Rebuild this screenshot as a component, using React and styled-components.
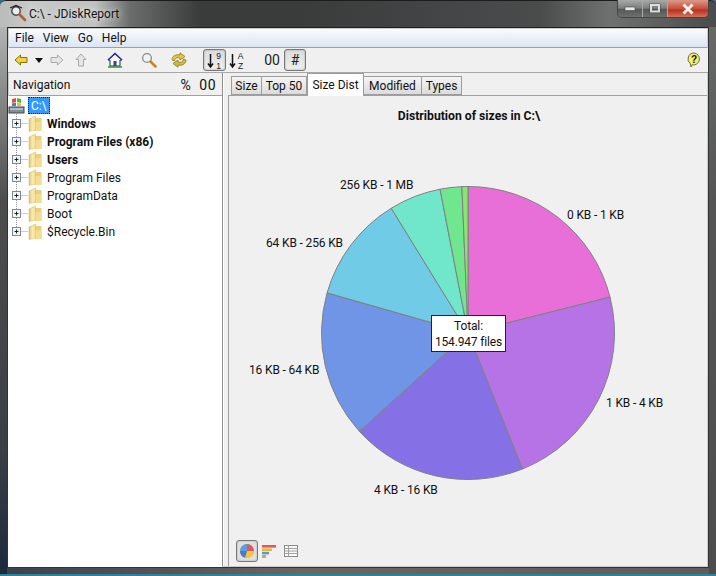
import React from "react";
import styled, { createGlobalStyle } from "styled-components";

const Global = createGlobalStyle`
  html, body { margin: 0; padding: 0; width: 716px; height: 576px; overflow: hidden; background: #2f6f80; }
  * { box-sizing: border-box; }
`;

const Win = styled.div`
  width: 716px; height: 576px; display: flex; flex-direction: column;
  padding: 0 7px 6px 7px; border-radius: 6px 6px 0 0;
  font: 12px Roboto, "Noto Sans", sans-serif; color: #111;
  background:
    linear-gradient(180deg, #c4c6c6 0, #8a8c8c 90px, #4d4d4d 200px, #3a3f48 450px, #1d2a3c 100%) left top / 7px 100% no-repeat,
    linear-gradient(180deg, #6a6c6c 0, #555 200px, #4d4d4d 100%) right top / 7px 100% no-repeat,
    linear-gradient(90deg, #3a4150 0, #6b6560 300px, #5f5c5a 100%);
  border-bottom: 2px solid #2f8296;
`;
const TitleBar = styled.div`
  height: 27px; margin: 0 -7px; padding: 0 7px 0 9px; flex: none; display: flex; align-items: flex-start;
  border-top: 1px solid #1c1c1c; border-radius: 6px 6px 0 0;
  background: linear-gradient(90deg, #b9bbbb 0, #c8caca 30px, #c0c2c2 95px, #6b6d6d 130px, #3a3c3c 200px, #3a3c3c 300px, #454848 470px, #4a4c4c 540px, #6f7171 610px, #4a4c4c 716px);
`;
const AppIcon = styled.svg` width: 18px; height: 18px; margin-top: 3px; flex: none; `;
const TitleText = styled.span`
  margin: 3px 0 0 2px; font-size: 12px; line-height: 20px; color: #111; text-shadow: 0 0 6px #fff;
`;
const Caption = styled.div`
  margin-left: auto; display: flex; height: 18px; width: 92px; margin-top: -1px;
  border: 1px solid #444; border-top: none; border-radius: 0 0 5px 5px; overflow: hidden;
`;
const CapBtn = styled.div`
  flex: ${p => p.$close ? "0 0 41px" : "1"}; display: flex; align-items: center; justify-content: center;
  border-left: ${p => p.$first ? "0" : "1px solid #aaa"};
  background: ${p => p.$close
    ? "linear-gradient(180deg, #dd9a8c 0, #c7503c 50%, #b8321f 60%, #d5705e 100%)"
    : "linear-gradient(180deg, #a8aaaa 0, #7d7f7f 48%, #565858 55%, #6d6f6f 100%)"};
`;
const Client = styled.div`
  flex: 1; min-height: 0; display: flex; flex-direction: column; background: #f0f0f0;
  border: 1px solid #333; border-width: 0 1px 1px 1px; outline: 1px solid #ccc; outline-offset: -2px;
`;
const MenuBar = styled.div`
  height: 21px; flex: none; display: flex; align-items: center; padding: 1px 7px 0; gap: 9px;
  background: linear-gradient(180deg, #fbfcfe 0, #dbe5f3 100%);
  border-top: 1px solid #1e1e1e; border-bottom: 1px solid #a0a0a0; font-size: 12px;
`;
const ToolBar = styled.div`
  height: 25px; flex: none; display: flex; align-items: center; background: #f0f0f0;
  border-bottom: 1px solid #a8a8a8; position: relative; padding-left: 2px;
`;
const Tool = styled.div`
  flex: none; width: ${p => p.$w || 22}px; height: 22px; margin-left: ${p => p.$ml || 0}px;
  display: flex; align-items: center; justify-content: center; border-radius: 3px;
  font-size: 14px; color: #222;
  ${p => p.$on ? "border: 1px solid #777; background: linear-gradient(180deg,#dcdcdc,#eeeeee); box-shadow: inset 0 0 2px #999;" : ""}
`;
const Help = styled.div` margin-left: auto; margin-right: 7px; display: flex; `;
const Main = styled.div` flex: 1; min-height: 0; display: flex; `;
const Left = styled.div`
  width: 215px; flex: none; display: flex; flex-direction: column;
  border-right: 1px solid #8e8e8e;
`;
const NavHead = styled.div`
  height: 23px; flex: none; display: flex; align-items: center; justify-content: space-between;
  padding: 1px 6px 0 5px; font-size: 12px; background: #f0f0f0; border-bottom: 1px solid #a0a0a0;
`;
const NavCols = styled.span` font-size: 14px; letter-spacing: .5px; word-spacing: 4px; `;
const Tree = styled.div` flex: 1; background: #fff; display: flex; flex-direction: column; position: relative; padding-bottom: 1px; `;
const Row = styled.div` height: 18px; display: flex; align-items: center; flex: none; `;
const Expander = styled.svg` width: 20px; height: 18px; flex: none; `;
const RootIcon = styled.svg` width: 17px; height: 17px; margin: 0 3px 0 0; flex: none; `;
const Sel = styled.span`
  background: #3399ff; color: #fff; height: 17px; line-height: 16px; padding: 0 2px; border: 1px dotted #123; font-size: 12px;
`;
const Folder = styled.svg` width: 14px; height: 17px; margin-right: 5px; flex: none; `;
const RowText = styled.span`
  font-weight: ${p => p.$b ? 700 : 400}; font-size: 12px; white-space: nowrap; padding-top: 2px;
`;
const Right = styled.div`
  flex: 1; min-width: 0; display: flex; flex-direction: column; padding: 0 0 0 4px;
  border-left: 1px solid #fff; background: #f0f0f0;
`;
const Tabs = styled.div`
  height: 23px; flex: none; display: flex; align-items: flex-end; padding-left: 3px;
  border-bottom: 1px solid #a0a0a0;
`;
const Tab = styled.div`
  height: ${p => p.$on ? 23 : 19}px; width: ${p => p.$w}px; margin-bottom: ${p => p.$on ? -1 : 0}px;
  display: flex; align-items: center; justify-content: center; font-size: 12px; padding-top: ${p => p.$on ? 0 : 1}px;
  background: ${p => p.$on ? "#fff" : "linear-gradient(180deg, #f4f4f4, #dcdcdc)"};
  border: 1px solid #9c9c9c; border-left-width: ${p => p.$on ? 1 : 0}px; border-bottom: ${p => p.$on ? "0" : "1px solid #9c9c9c"};
  position: relative; z-index: ${p => p.$on ? 1 : 0};
  &:first-child { border-left-width: 1px; }
`;
const Panel = styled.div`
  flex: 1; min-height: 0; display: flex; flex-direction: column; border-left: 1px solid #a0a0a0; background: #f0f0f0;
`;
const ChartTitle = styled.div`
  flex: none; text-align: center; font-weight: 700; font-size: 12.2px; padding-top: 13px; height: 41px; margin-left: -3px; margin-right: -4px;
`;
const Chart = styled.div` position: relative; flex: 1; min-height: 0; `;
const PieSvg = styled.svg` position: absolute; left: 91px; top: 48px; width: 296px; height: 296px; `;
const Label = styled.span`
  position: absolute; left: ${p => p.$x}px; top: ${p => p.$y}px; font-size: 12px; white-space: nowrap; line-height: 16px; letter-spacing: -.15px;
`;
const Tip = styled.div`
  position: absolute; left: 202px; top: 178px; width: 75px; height: 37px; background: #fff;
  border: 1px solid #222; text-align: center; font-size: 12px; line-height: 16px; padding-top: 2px; letter-spacing: -.15px;
`;
const Views = styled.div` flex: none; height: 27px; display: flex; align-items: flex-start; padding-left: 7px; `;
const ViewBtn = styled.div`
  width: 22px; height: 22px; display: flex; align-items: center; justify-content: center; border-radius: 3px;
  ${p => p.$on ? "border: 1px solid #777; background: #e0e0e0; box-shadow: inset 0 0 2px #aaa;" : ""}
`;

const YArrow = ({ flip, fill = "#f3d23c", stroke = "#8a6d10" }) => (
  <svg width="14" height="12" viewBox="0 0 14 12" style={flip ? { transform: "scaleX(-1)" } : undefined}>
    <path d="M1 6 L6.5 1 V3.5 H13 V8.5 H6.5 V11 Z" fill={fill} stroke={stroke} strokeLinejoin="round" />
  </svg>
);
const UpArrow = () => (
  <svg width="12" height="14" viewBox="0 0 12 14"><path d="M6 1 L11 6.5 H8.5 V13 H3.5 V6.5 H1 Z" fill="#e6e6e6" stroke="#a9a9a9" strokeLinejoin="round" /></svg>
);
const Home = () => (
  <svg width="16" height="16" viewBox="0 0 16 16">
    <path d="M1 8 L8 1.5 L15 8 H13 V14 H3 V8 Z" fill="#fdf8e8" stroke="#1c2a80" strokeLinejoin="round" />
    <path d="M1 8 L8 1.5 L15 8" fill="none" stroke="#2030a8" strokeWidth="1.6" />
    <rect x="6.5" y="9" width="3" height="5" fill="#3040b0" />
    <path d="M1 15 H15" stroke="#3f9a3a" strokeWidth="1.6" />
  </svg>
);
const Search = () => (
  <svg width="16" height="16" viewBox="0 0 16 16">
    <circle cx="6" cy="6" r="4.4" fill="#eef4f8" stroke="#8a8a8a" strokeWidth="1.3" />
    <path d="M9.5 9.5 L14.5 14.5" stroke="#c08a20" strokeWidth="2.6" strokeLinecap="round" />
  </svg>
);
const Refresh = () => (
  <svg width="18" height="16" viewBox="0 0 18 16">
    <path d="M2 8 C2 4 6 2 10 3 V0.8 L15 4.5 L10 8 V6 C7 5 5 6 4.5 9 Z" fill="#e6c63c" stroke="#8f7a20" strokeWidth=".8" />
    <path d="M16 8 C16 12 12 14 8 13 V15.2 L3 11.5 L8 8 V10 C11 11 13 10 13.5 7 Z" fill="#d6b838" stroke="#7f7a30" strokeWidth=".8" />
  </svg>
);
const SortIcon = ({ a, b }) => (
  <svg width="18" height="19" viewBox="0 0 18 19">
    <path d="M4.5 3 V15.5 M2 12.5 L4.5 16 L7 12.5" fill="none" stroke="#111" strokeWidth="1.5" />
    <text x="12.5" y="7.8" textAnchor="middle" fontSize="8.5" fontFamily="Liberation Sans" fill="#222">{a}</text>
    <text x="12.5" y="17.6" textAnchor="middle" fontSize="8.5" fontFamily="Liberation Sans" fill="#222">{b}</text>
  </svg>
);
const HelpIcon = () => (
  <svg width="14" height="16" viewBox="0 0 14 16">
    <path d="M7 1 A6 6 0 1 1 5 12.8 L4 15 L3.4 11.8 A6 6 0 0 1 7 1 Z" fill="#f6ee6a" stroke="#6f6f3a" />
    <text x="7" y="11" textAnchor="middle" fontSize="10" fontWeight="700" fontFamily="Liberation Sans" fill="#111">?</text>
  </svg>
);
const FolderIcon = () => (
  <Folder viewBox="0 0 14 17">
    <defs>
      <linearGradient id="fg" x1="0" x2="1" y1="0" y2="0">
        <stop offset="0" stopColor="#d8bf6e" /><stop offset=".5" stopColor="#f9ecb0" /><stop offset="1" stopColor="#f4dd8e" />
      </linearGradient>
    </defs>
    <path d="M6 3 H13.5 V16 H6 Z" fill="#e9cf7e" />
    <path d="M1 4 L7.5 1 V15 L1 16.5 Z" fill="url(#fg)" stroke="#cdb56a" strokeWidth=".5" />
    <path d="M7.5 7 L13.5 7 V16 H3 L7.5 15 Z" fill="#f3dd94" />
  </Folder>
);
const Exp = ({ last }) => (
  <Expander viewBox="0 0 20 18">
    <path d={`M8.5 0 V${last ? 9 : 18} M8.5 9.5 H20`} stroke="#999" strokeDasharray="1 1" fill="none" />
    <rect x="4.5" y="5.5" width="8" height="8" fill="#f4f4f4" stroke="#7b8a9a" />
    <path d="M6.5 9.5 H10.5 M8.5 7.5 V11.5" stroke="#222" />
  </Expander>
);
const polar = (a, r = 146.5) => {
  const t = (a * Math.PI) / 180;
  return [148 + r * Math.sin(t), 148 - r * Math.cos(t)];
};
const slices = [
  [0, 75.8, "#e86fd8"], [75.8, 158.2, "#b673e6"], [158.2, 227.8, "#8670e6"], [227.8, 285.9, "#7094e6"],
  [285.9, 328.4, "#70cbe6"], [328.4, 349, "#70e6cb"], [349, 357.6, "#70e68f"], [357.6, 360, "#86e670"],
];
const labels = [
  ["0 KB - 1 KB", 338, 70], ["1 KB - 4 KB", 377, 258], ["4 KB - 16 KB", 145, 345], ["16 KB - 64 KB", 20, 225],
  ["64 KB - 256 KB", 37, 98], ["256 KB - 1 MB", 111, 40],
];
const folders = [
  ["Windows", 1], ["Program Files (x86)", 1], ["Users", 1], ["Program Files"], ["ProgramData"], ["Boot"], ["$Recycle.Bin"],
];
const tabs = [["Size", 31], ["Top 50", 45], ["Size Dist", 57, 1], ["Modified", 58], ["Types", 40]];

export default function App() {
  return (
    <Win>
      <Global />
      <TitleBar>
        <AppIcon viewBox="0 0 18 18">
          <circle cx="7" cy="7" r="4.2" fill="#e8eef2" stroke="#444" strokeWidth="1.4" />
          <path d="M10.5 10.5 L16 16" stroke="#a8642c" strokeWidth="2.6" strokeLinecap="round" />
          <path d="M1 4 L7 1.5 L13 4" stroke="#222" strokeWidth="1.2" fill="none" />
        </AppIcon>
        <TitleText>C:\ - JDiskReport</TitleText>
        <Caption>
          <CapBtn $first>
            <svg width="12" height="6"><rect x="1" y="1" width="10" height="3.5" fill="#e8e8e8" stroke="#444" strokeWidth=".6" /></svg>
          </CapBtn>
          <CapBtn>
            <svg width="12" height="11"><rect x="1" y="1" width="10" height="8.5" fill="none" stroke="#333" strokeWidth=".7" /><rect x="2" y="2" width="8" height="6.5" fill="none" stroke="#ddd" strokeWidth="2" /></svg>
          </CapBtn>
          <CapBtn $close>
            <svg width="14" height="12"><path d="M2.5 1.5 L11.5 10.5 M11.5 1.5 L2.5 10.5" stroke="#f4f0ec" strokeWidth="3" /></svg>
          </CapBtn>
        </Caption>
      </TitleBar>
      <Client>
        <MenuBar><span>File</span><span>View</span><span>Go</span><span>Help</span></MenuBar>
        <ToolBar>
          <Tool><YArrow /></Tool>
          <Tool $w={10} $ml={2}><svg width="8" height="5"><path d="M0 0 H8 L4 5 Z" fill="#111" /></svg></Tool>
          <Tool $ml={2}><YArrow flip fill="#e6e6e6" stroke="#a9a9a9" /></Tool>
          <Tool $ml={2}><UpArrow /></Tool>
          <Tool $ml={12}><Home /></Tool>
          <Tool $ml={12}><Search /></Tool>
          <Tool $ml={8}><Refresh /></Tool>
          <Tool $ml={13} $w={23} $on><SortIcon a="9" b="1" /></Tool>
          <Tool><SortIcon a="A" b="Z" /></Tool>
          <Tool $ml={13}>00</Tool>
          <Tool $ml={1} $on>#</Tool>
          <Help><HelpIcon /></Help>
        </ToolBar>
        <Main>
          <Left>
            <NavHead><span>Navigation</span><NavCols>% 00</NavCols></NavHead>
            <Tree>
              <Row>
                <RootIcon viewBox="0 0 17 17">
                  <rect x="1" y="10" width="15" height="6" fill="#7f8f9a" stroke="#444" />
                  <path d="M2 12 H15" stroke="#dfe8ef" />
                  <path d="M4 2 L8 1 V5 L4 6 Z" fill="#e05030" /><path d="M9 1 L13 2 V6 L9 5 Z" fill="#60b040" />
                  <path d="M4 6.5 L8 5.5 V9 H4 Z" fill="#4080d0" /><path d="M9 5.5 L13 6.5 V9 H9 Z" fill="#e8c030" />
                </RootIcon>
                <Sel>C:\</Sel>
              </Row>
              {folders.map(([name, b], i) => (
                <Row key={name}>
                  <Exp last={i === folders.length - 1} />
                  <FolderIcon />
                  <RowText $b={b}>{name}</RowText>
                </Row>
              ))}
            </Tree>
          </Left>
          <Right>
            <Tabs>
              {tabs.map(([t, w, on]) => <Tab key={t} $w={w} $on={on}>{t}</Tab>)}
            </Tabs>
            <Panel>
              <ChartTitle>Distribution of sizes in C:\</ChartTitle>
              <Chart>
                <PieSvg viewBox="0 0 296 296">
                  {slices.map(([a, b, c]) => {
                    const [x1, y1] = polar(a);
                    const [x2, y2] = polar(b);
                    return (
                      <path key={a} d={`M148 148 L${x1} ${y1} A146.5 146.5 0 ${b - a > 180 ? 1 : 0} 1 ${x2} ${y2} Z`}
                        fill={c} stroke="#808080" strokeWidth="1" />
                    );
                  })}
                </PieSvg>
                {labels.map(([t, x, y]) => <Label key={t} $x={x} $y={y}>{t}</Label>)}
                <Tip>Total:<br />154.947 files</Tip>
              </Chart>
              <Views>
                <ViewBtn $on>
                  <svg width="16" height="16" viewBox="0 0 16 16">
                    <circle cx="8" cy="8" r="7" fill="#e8a848" />
                    <path d="M8 8 V1 A7 7 0 0 1 15 8 Z" fill="#d85868" />
                    <path d="M8 8 H15 A7 7 0 0 1 6 14.7 Z" fill="#f0c838" />
                    <path d="M8 8 L6 14.7 A7 7 0 0 1 1 8 Z" fill="#4878d0" />
                    <path d="M8 8 H1 A7 7 0 0 1 8 1 Z" fill="#58a0e0" />
                  </svg>
                </ViewBtn>
                <ViewBtn>
                  <svg width="16" height="16" viewBox="0 0 16 16">
                    <rect x="1" y="2" width="14" height="2.6" fill="#e05858" />
                    <rect x="1" y="5.4" width="10" height="2.6" fill="#e8b830" />
                    <rect x="1" y="8.8" width="7" height="2.6" fill="#5898d8" />
                    <rect x="1" y="12.2" width="4" height="2.6" fill="#a8a868" />
                  </svg>
                </ViewBtn>
                <ViewBtn>
                  <svg width="16" height="16" viewBox="0 0 16 16">
                    <rect x="1.5" y="2.5" width="13" height="11" fill="#fafafa" stroke="#8a8a8a" />
                    <path d="M1.5 5.5 H14.5 M1.5 8 H14.5 M1.5 10.5 H14.5 M5.5 2.5 V13.5" stroke="#a0a0a0" />
                  </svg>
                </ViewBtn>
              </Views>
            </Panel>
          </Right>
        </Main>
      </Client>
    </Win>
  );
}
